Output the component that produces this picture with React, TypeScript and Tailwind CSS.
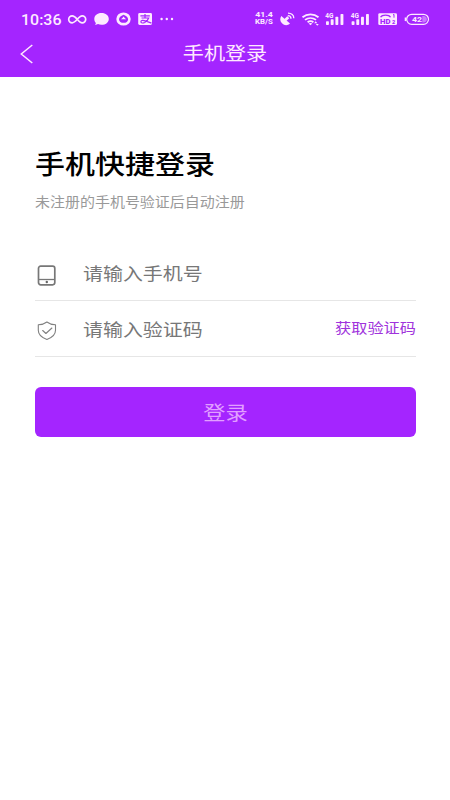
import type { ReactNode } from "react"

function StatusBar() {
  return (
    <div className="flex h-[38px] items-center pl-[21px] pr-[20px] text-[#fdeaff]">
      <span className="w-[46px] shrink-0 whitespace-nowrap">
        <span className="relative -top-px inline-block origin-left scale-x-[1.140] font-[Roboto] text-[14px] font-medium leading-none">10:36</span>
      </span>
      <svg className="shrink-0" width="110" height="16" viewBox="0 0 110 16" fill="none">
        <path d="M10.200 8C8.200 5.600 7 4.600 5.200 4.600a3.500 3.500 0 0 0 0 7c4 0 6-7 10-7a3.500 3.500 0 0 1 0 7c-1.800 0-3-1.200-5-3.600Z" transform="translate(0 .2)" stroke="currentColor" strokeWidth="1.700" />
        <path d="M34.500 2c4.200 0 7.300 2.600 7.300 5.900s-3.100 5.900-7.300 5.900c-1.300 0-2.500-.2-3.500-.7-.9.500-2 .7-3.200.6.700-.5 1-1.100 1.100-1.800-1-1-1.600-2.400-1.600-4C27.300 4.600 30.300 2 34.500 2Z" fill="currentColor" />
        <ellipse cx="56.500" cy="8" rx="7.200" ry="6.600" fill="currentColor" />
        <path d="M56.600 3.800c2.900 1.200 4.500 2.800 4.500 4.600 0 2-2 3.400-4.500 3.400S52 10.400 52 8.400c0-1.800 1.700-3.400 4.600-4.600Z" fill="#a425ff" />
        <path d="M53.600 9h6M56.600 5.500c-.6 1-1.600 1.800-2.600 2.800h5.200c-1-1-2-1.800-2.600-2.800Z" fill="currentColor" />
        <rect x="71.200" y="2" width="13.800" height="12" rx="1.400" fill="currentColor" />
        <path d="M73.400 4.800h9.400M78 3v4M74.500 7h7.200c-.7 2-2.300 3.600-4 4.500-1.400.7-3.800.8-3.800-.7 0-1.700 2.300-1.800 4.400-.9l6.200 2.200" stroke="#a425ff" strokeWidth="1.200" />
        <g fill="currentColor">
          <circle cx="94.600" cy="8" r="1.200" />
          <circle cx="99.800" cy="8" r="1.200" />
          <circle cx="105" cy="8" r="1.200" />
        </g>
      </svg>
      <div className="ml-auto flex items-center">
        <div className="mr-[7px] flex w-[18px] flex-col items-center whitespace-nowrap font-[Roboto] text-[7px] font-bold leading-[7px]">
          <span className="scale-x-[1.250]">41.4</span>
          <span className="scale-x-[1.120]">KB/S</span>
        </div>
        <svg width="150" height="18" viewBox="0 0 150 18" fill="none">
          <path d="M1.300 5.900 10 13.600C7.300 16 4.200 15.500 2 13.300c-2-1.900-2.300-4.800-.7-7.400Z" fill="currentColor" />
          <path d="m5.300 10 3-2.800" stroke="currentColor" strokeWidth="2.800" />
          <path d="M7.800 5.700c1.900 0 3.200 1.200 3.200 3M8 3.200c3.600 0 5.800 2 5.800 5" stroke="currentColor" strokeWidth="1.300" />
          <path d="M22.500 7.300c4.700-3.800 11.300-3.800 16 0M25 9.900c3.200-2.500 7.800-2.500 11 0M27.600 12.300c1.700-1.300 4.100-1.300 5.800 0" stroke="currentColor" strokeWidth="1.800" />
          <path d="m28.600 13.500 1.900 1.800 1.900-1.800c-1.100-.8-2.700-.8-3.800 0Z" fill="currentColor" />
          <path d="m34.100 13.200 1.600-1.900 1.600 1.900ZM35.800 14l1.500 1.700 1.500-1.700Z" fill="currentColor" />
          <g fill="currentColor">
            <rect x="46" y="11.300" width="2.900" height="3.700" rx=".7" />
            <rect x="50.700" y="9.300" width="2.900" height="5.700" rx=".7" />
            <rect x="55.400" y="6.800" width="2.900" height="8.200" rx=".7" />
            <rect x="60.500" y="4" width="2.900" height="11" rx=".7" />
            <text x="45.200" y="7.900" fontFamily="Roboto" fontSize="6.500" fontWeight="700">4G</text>
            <rect x="71.600" y="11.300" width="2.900" height="3.700" rx=".7" />
            <rect x="76.300" y="9.300" width="2.900" height="5.700" rx=".7" />
            <rect x="81" y="6.800" width="2.900" height="8.200" rx=".7" />
            <rect x="86" y="4" width="2.900" height="11" rx=".7" />
            <text x="70.800" y="7.900" fontFamily="Roboto" fontSize="6.500" fontWeight="700">4G</text>
            <rect x="98.300" y="3.200" width="18.700" height="11.900" rx="1.400" />
          </g>
          <path d="M100.600 7.200c1.400-2.800 8.500-2.800 9.900 0" stroke="#a425ff" strokeWidth="1.400" />
          <path d="M113 5l1-.6v3.300" stroke="#a425ff" strokeWidth="1" />
          <text x="100" y="13.900" fontFamily="Roboto" fontSize="6.700" fontWeight="900" fill="#a425ff" textLength="10.500" lengthAdjust="spacingAndGlyphs">HD</text>
          <text x="112" y="13.900" fontFamily="Roboto" fontSize="5.500" fontWeight="900" fill="#a425ff">2</text>
          <rect x="126.700" y="4.300" width="21.800" height="10" rx="5" stroke="currentColor" strokeWidth="1.200" />
          <path d="M125.500 7.500v3.600" stroke="currentColor" strokeWidth="1.600" />
          <path d="M142.300 6h1.200c4.500 0 4.500 6.600 0 6.600h-1.200Z" fill="#c878ff" />
          <text x="132" y="12.200" fontFamily="Roboto" fontSize="8" fontWeight="700" fill="currentColor" textLength="10" lengthAdjust="spacingAndGlyphs">42</text>
        </svg>
      </div>
    </div>
  )
}

function PhoneIcon() {
  return (
    <svg width="20" height="22" viewBox="0 0 20 22" fill="none" stroke="#777" strokeWidth="1.700">
      <rect x="1.500" y="2.200" width="16.300" height="18.600" rx="2.200" />
      <path d="M2 15.500h16" strokeWidth="1.300" />
      <circle cx="9.800" cy="18" r="1.200" fill="#666" stroke="none" />
    </svg>
  )
}

function ShieldIcon() {
  return (
    <svg width="20" height="20" viewBox="0 0 20 20" fill="none" stroke="#808080" strokeWidth="1.100" strokeLinejoin="round" strokeLinecap="round">
      <path d="M9.900 1c2.500 1.900 5.200 2.700 8.600 2.700v5.600c0 4.300-3.300 7.300-8.600 9.200-5.300-1.900-8.600-4.900-8.600-9.200V3.700c3.400 0 6.100-.8 8.600-2.700Z" />
      <path d="m5.700 9.500 3.200 3 6-5.500" />
    </svg>
  )
}

function Field({ icon, label, action }: { icon: ReactNode; label: string; action?: string }) {
  return (
    <div className="flex h-14 items-center border-b border-[#e6e6e6]">
      <span className="w-[47.500px] shrink-0 pl-[2px] pt-[5px]">{icon}</span>
      <span className="origin-left scale-x-[1.140] text-[17.500px] leading-6 text-[#777]">{label}</span>
      {action && <button className="mb-[3px] ml-auto origin-right scale-x-[1.140] text-[14.200px] leading-6 text-[#a033dc]">{action}</button>}
    </div>
  )
}

export default function App() {
  return (
    <div className="h-[800px] w-[450px] bg-white font-['Noto_Sans_CJK_SC',sans-serif]">
      <header className="h-[77px] bg-[#a425ff]">
        <StatusBar />
        <div className="grid h-[32px] grid-cols-[50px_1fr_50px] items-center text-[#ffe8ff]">
          <button className="pl-[20px]" aria-label="返回">
            <svg width="14" height="20" viewBox="0 0 14 20" fill="none" stroke="currentColor" strokeWidth="1.500">
              <path d="M12.300 1 1.300 10l11 9" />
            </svg>
          </button>
          <h1 className="mb-[4px] scale-x-[1.140] text-center text-[18.500px] leading-6">手机登录</h1>
        </div>
      </header>

      <main className="pl-[35px] pr-[34px] pt-[66px]">
        <h2 className="origin-left scale-x-[1.145] text-[26.200px] font-medium leading-10 text-black">手机快捷登录</h2>
        <p className="mt-[9px] origin-left scale-x-[1.140] whitespace-nowrap text-[13.150px] leading-5 text-[#999]">未注册的手机号验证后自动注册</p>

        <form className="mt-[33px]">
          <Field icon={<PhoneIcon />} label="请输入手机号" />
          <Field icon={<ShieldIcon />} label="请输入验证码" action="获取验证码" />
          <button type="button" className="mt-[30px] h-[50px] w-full rounded-[6px] bg-[#a425ff] text-[19.500px] text-[#e19fff]">
            <span className="inline-block scale-x-[1.140]">登录</span>
          </button>
        </form>
      </main>
    </div>
  )
}
